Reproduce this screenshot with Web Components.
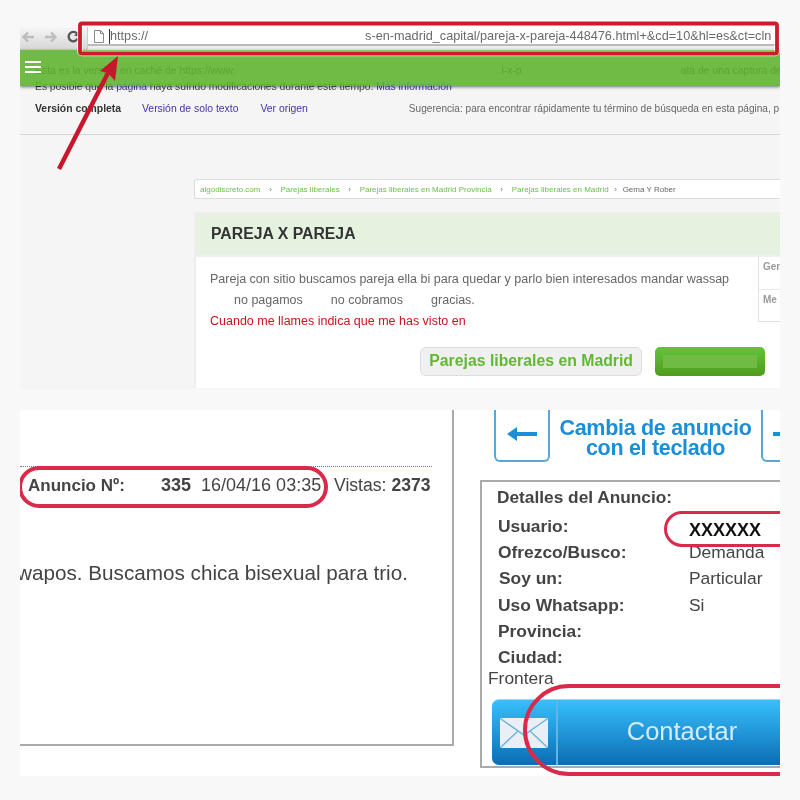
<!DOCTYPE html>
<html lang="es"><head><meta charset="utf-8"><title>Anuncio</title>
<style>
html,body{margin:0;padding:0;background:#f8f8f8}
body{width:800px;height:800px;overflow:hidden;font-family:"Liberation Sans",Arial,sans-serif}
</style></head><body>
<shot-page>
  <browser-shot>
    <browser-toolbar slot="toolbar"></browser-toolbar>
    <cache-notice></cache-notice>
    <page-breadcrumb></page-breadcrumb>
    <ad-card></ad-card>
  </browser-shot>
  <detail-shot>
    <ad-sheet slot="left"></ad-sheet>
    <keyboard-hint slot="right"></keyboard-hint>
    <details-box slot="right"></details-box>
  </detail-shot>
  <red-annotations></red-annotations>
</shot-page>
<script>
function def(name, html){
  customElements.define(name, class extends HTMLElement{
    constructor(){super();this.attachShadow({mode:'open'}).innerHTML=html;}
  });
}
def('shot-page',`<style>
:host{display:flex;flex-direction:column;gap:21px;position:relative;width:800px;height:800px;box-sizing:border-box;padding:27px 20px 0;filter:blur(.35px)}
</style><slot></slot>`);

def('browser-shot',`<style>
:host{display:block;height:362px;background:#f5f5f5;overflow:hidden}
.body{position:relative;height:339px}
.bar{position:absolute;left:0;right:0;top:0;height:36px;background:rgba(93,179,44,.88);box-shadow:0 1px 3px rgba(0,0,0,.55);display:flex;flex-direction:column;gap:3px;padding:11px 0 0 5px;box-sizing:border-box}
.bar i{display:block;width:16px;height:2px;background:#fff}
</style><slot name="toolbar"></slot><div class="body"><slot></slot><div class="bar"><i></i><i></i><i></i></div></div>`);

def('browser-toolbar',`<style>
:host{display:flex;align-items:center;height:23px;background:linear-gradient(#f6f6f6,#d6d6d6);position:relative}
svg{display:block;flex:none}
.nav{display:flex;align-items:center;gap:9px;width:67px;flex:none;padding-bottom:4px;box-sizing:border-box}
.omni{flex:1;min-width:0;height:23px;background:linear-gradient(#fff 0 17px,#bbb 17px 19px,#eee 19px);border-left:1px solid #ccc;box-sizing:border-box;display:flex;align-items:center;padding:0 0 5px 6px;font:12.7px/18px "Liberation Sans",Arial,sans-serif;color:#6a6a6a;white-space:nowrap;overflow:hidden}
.omni span{flex:none}
.caret{width:1px;height:15px;background:#333;margin:0 0 0 5px}
.gap{width:217px}
</style>
<div class="nav">
<svg width="14" height="14" viewBox="0 0 14 14" style="margin-left:1px"><path d="M13 7H3M7 2.500 2.500 7 7 11.500" fill="none" stroke="#bdbdbd" stroke-width="2.400"/></svg>
<svg width="14" height="14" viewBox="0 0 14 14"><path d="M1 7h10M7 2.500 11.500 7 7 11.500" fill="none" stroke="#bdbdbd" stroke-width="2.400"/></svg>
<svg width="13" height="13" viewBox="0 0 13 13"><path d="M10.600 8.600A4.700 4.700 0 1 1 10 3.600" fill="none" stroke="#555" stroke-width="2.300"/><path d="M12 .8V6H7z" fill="#555"/></svg>
</div>
<div class="omni">
<svg width="10" height="13" viewBox="0 0 10 13"><path d="M.5.500H6.500L9.500 3.500V12.500H.5zM6.500.500V3.500H9.500" fill="#fff" stroke="#8a8a8a"/></svg>
<span class="caret"></span><span>https://</span><span class="gap"></span><span>s-en-madrid_capital/pareja-x-pareja-448476.html+&amp;cd=10&amp;hl=es&amp;ct=cln</span>
</div>`);

def('cache-notice',`<style>
:host{display:block;padding:13px 0 0 15px;font-size:10.4px;line-height:16px;color:#444;white-space:nowrap}
.l{display:flex}
.l>*,.row>*{flex:none}
a{color:#4433aa;text-decoration:none}
.row{display:flex;margin-top:6px;height:16px}
b{color:#333;width:107px}
.s{color:#666;font-size:10.100px}
hr{margin:17px 0 0 -15px;border:0;border-top:1px solid #d6d6d6}
</style>
<div class="l"><span>Esta es la versión en caché de https://www.</span><span style="margin-left:266px">i-x-p</span><span style="margin-left:159px">ata de una captura de</span></div>
<div class="l"><span style="letter-spacing:-.05px">Es posible que la <a>página</a> haya sufrido modificaciones durante este tiempo. <a>Más información</a></span></div>
<div class="row"><b>Versión completa</b><a>Versión de solo texto</a><a style="margin-left:22px">Ver origen</a><span class="s" style="margin-left:101px">Sugerencia: para encontrar rápidamente tu término de búsqueda en esta página, p</span></div>
<hr>`);

def('page-breadcrumb',`<style>
:host{display:flex;align-items:center;height:20px;box-sizing:border-box;margin:44px 0 0 174px;background:#fff;border:1px solid #ddd;border-right:0;border-radius:3px 0 0 3px;padding-left:5px;font-size:8px;color:#6cc04a;white-space:nowrap}
i{font-style:normal;color:#777;width:20px;text-align:center}
span{color:#666}
</style>algodiscreto.com<i>›</i>Parejas liberales<i>›</i>Parejas liberales en Madrid Provincia<i>›</i>Parejas liberales en Madrid<i style="width:14px">›</i><span>Gema Y Rober</span>`);

def('ad-card',`<style>
:host{display:block;margin:13px 0 0 174px;height:176px;background:#fff;border-left:2px solid #eee;border-top:2px solid #eee;box-sizing:border-box}
h1{margin:0;height:41px;background:#e6f2e0;font-size:15.800px;line-height:40px;font-weight:bold;color:#333;padding-left:15px;border-bottom:2px solid #f0f0f0}
.main{display:flex}
.txt{flex:1;padding:12px 0 0 14px;font-size:12.500px;line-height:21px;color:#666;white-space:nowrap;height:54px}
.red{color:#c8141e}
.side{width:22px;height:65px;border-left:1px solid #e2e2e2;border-bottom:1px solid #e2e2e2;overflow:hidden;box-sizing:border-box;font-size:10px;font-weight:bold;color:#999;padding-left:4px;white-space:nowrap}
.side div{height:32px;line-height:20px}
.side div+div{border-top:1px solid #e8e8e8;margin-left:-4px;padding-left:4px}
.btns{display:flex;justify-content:flex-end;gap:13px;padding-right:15px;margin-top:24px}
.b1{height:29px;box-sizing:border-box;padding:0 8px;background:#f0f0f0;border:1px solid #ddd;border-radius:6px;font-size:15.800px;font-weight:bold;line-height:26px;color:#62b834}
.b2{width:110px;height:29px;box-sizing:border-box;padding:8px;border-radius:5px;background:linear-gradient(#62c43a,#4f9c1e);display:flex}
.b2 i{flex:1;background:#6fbb44}
</style>
<h1>PAREJA X PAREJA</h1>
<div class="main"><div class="txt">Pareja con sitio buscamos pareja ella bi para quedar y parlo bien interesados mandar wassap<br>
<span style="margin-left:24px">no pagamos</span><span style="margin-left:28px">no cobramos</span><span style="margin-left:28px">gracias.</span><br>
<span class="red">Cuando me llames indica que me has visto en</span></div>
<div class="side"><div>Gen</div><div>Me</div></div></div>
<div class="btns"><div class="b1">Parejas liberales en Madrid</div><div class="b2"><i></i></div></div>`);

def('detail-shot',`<style>
:host{display:flex;height:366px;background:#fff;overflow:hidden;position:relative}
.l{width:434px;flex:none}
.r{flex:1;min-width:0}
</style><div class="l"><slot name="left"></slot></div><div class="r"><slot name="right"></slot></div>
<svg width="280" height="92" style="position:absolute;left:503px;top:274px;overflow:visible"><rect x="2" y="2" width="340" height="88" rx="44" fill="none" stroke="#da2a4c" stroke-width="4"/></svg>`);

def('ad-sheet',`<style>
:host{display:block;height:336px;box-sizing:border-box;padding-top:56px;border-right:2px solid #aaa;border-bottom:2px solid #aaa;color:#444;white-space:nowrap;overflow:hidden}
.meta{display:flex;align-items:center;height:39px;border-top:1px dotted #5b7fc0;width:412px;font-size:18px}
.oval{flex:none;box-sizing:border-box;width:310px;height:42px;margin:-2px 0 -3px -2px;background:#fff;border:4px solid #da2a4c;border-radius:21px;display:flex;align-items:center;padding:0 0 3px 6px}
.oval b:first-child{width:133px;font-size:17px}
.oval b+span{margin-left:10px}
.v{margin:-3px 0 0 6px;font-size:17.600px}
p{margin:55px 0 0 -3px;font-size:20.700px;line-height:24px;color:#444}
</style>
<div class="meta"><div class="oval"><b>Anuncio Nº:</b><b>335</b><span>16/04/16 03:35</span></div><div class="v">Vistas: <b>2373</b></div></div>
<p>wapos. Buscamos chica bisexual para trio.</p>`);

def('keyboard-hint',`<style>
:host{display:flex;height:52px;padding-left:40px;color:#1a8fd8}
.k{flex:none;box-sizing:border-box;height:52px;border:2px solid #55a8de;border-top:0;border-radius:0 0 6px 6px;display:flex;align-items:center;justify-content:center}
.t{flex:none;width:211px;text-align:center;font-size:21.500px;font-weight:bold;line-height:20px;letter-spacing:-.3px;padding-top:8px;box-sizing:border-box;height:52px}
svg{display:block;flex:none}
</style>
<div class="k" style="width:56px"><svg width="30" height="16" viewBox="0 0 30 16" style="margin-top:-2px"><path d="M0 8 10 1V6H30V10H10V15z" fill="#1a8fd8"/></svg></div>
<div class="t">Cambia de anuncio<br>con el teclado</div>
<div class="k" style="width:60px;justify-content:flex-start;padding-left:10px"><svg width="30" height="16" viewBox="0 0 30 16" style="margin-top:-2px"><path d="M0 6H20V1L30 8 20 15V10H0z" fill="#1a8fd8"/></svg></div>`);

def('details-box',`<style>
:host{display:block;margin:18px 0 0 26px;width:320px;height:288px;box-sizing:border-box;border:2px solid #aaa;color:#444;position:relative}
h2{margin:0;padding:5px 0 0 15px;font-size:17.300px;line-height:20px;font-weight:bold;color:#444}
.rows{margin-top:6px;padding-left:16px;display:grid;grid-template-columns:191px 1fr;grid-auto-rows:26.200px;font-size:17.400px;line-height:26px}
b{font-weight:bold;white-space:nowrap}
.f{padding-left:6px;font-size:17.400px;line-height:18px;margin-top:-1px}
.o{position:absolute;left:182px;top:29px;width:170px;height:36px;box-sizing:border-box;background:#fff;border:3px solid #da2a4c;border-radius:18px;font-size:18px;font-weight:bold;line-height:32px;color:#111;padding-left:22px}
contact-button{margin:12px 0 0 10px}
</style>
<h2>Detalles del Anuncio:</h2>
<div class="rows"><b>Usuario:</b><span></span><b>Ofrezco/Busco:</b><span>Demanda</span><b style="padding-left:1px">Soy un:</b><span>Particular</span><b>Uso Whatsapp:</b><span>Si</span><b>Provincia:</b><span></span><b>Ciudad:</b><span></span></div>
<div class="f">Frontera</div>
<contact-button></contact-button>
<div class="o">XXXXXX</div>`);

def('contact-button',`<style>
:host{display:flex;width:310px;height:66px;border-radius:7px 0 0 7px;background:linear-gradient(#38bffc,#0b6db4);border-top:1px solid #9fd8ee;box-sizing:border-box;color:#d4ecfa}
.i{width:66px;flex:none;border-right:2px solid #5db7e2;display:flex;align-items:center;justify-content:center;box-sizing:border-box}
svg{display:block}
.c{width:248px;flex:none;text-align:center;font-size:25.500px;line-height:62px}
</style><div class="i"><svg width="48" height="30" viewBox="0 0 48 30"><rect width="48" height="30" rx="2" fill="#e9eff4"/><path d="M1 1 24 17 47 1M1 29 18 13M47 29 30 13" fill="none" stroke="#6fb4dc" stroke-width="1.500"/></svg></div><div class="c">Contactar</div>`);

def('red-annotations',`<style>
:host{display:block;position:absolute;left:0;top:0;width:800px;height:100px;pointer-events:none;overflow:visible}
svg{position:absolute;left:0;top:0;overflow:visible}
</style><svg width="800" height="180" viewBox="0 0 800 180">
<rect x="80" y="23.500" width="697" height="30" rx="2" fill="none" stroke="#fff" stroke-width="5.500" opacity=".85"/>
<rect x="80" y="23.500" width="697" height="30" rx="2" fill="none" stroke="#cc1b2c" stroke-width="3.800"/>
<path d="M59 169 108 73" stroke="#c8172c" stroke-width="4.500" fill="none"/>
<path d="M118 56 100 71 108 73 115 81z" fill="#c8172c"/>
</svg>`);
</script>
</body></html>
